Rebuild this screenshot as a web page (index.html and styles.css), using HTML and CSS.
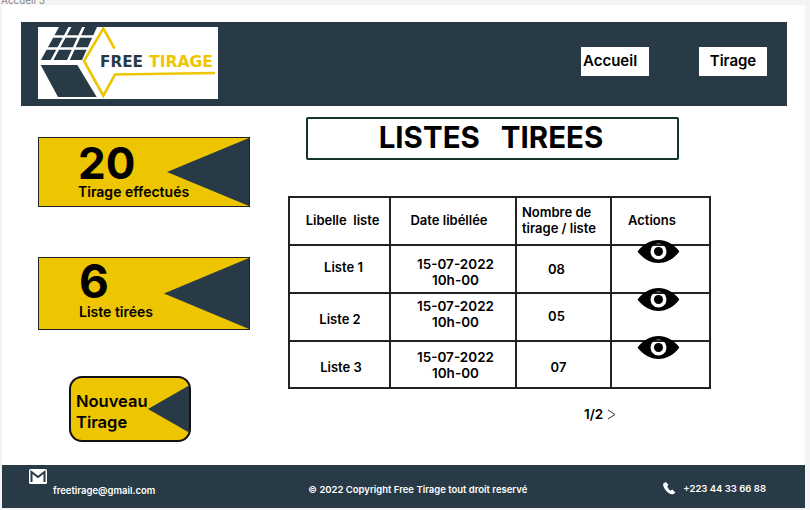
FILE: index.html
```html
<!DOCTYPE html>
<html lang="fr">
<head>
  <meta charset="UTF-8">
  <title>Free Tirage</title>
  <link rel="stylesheet" href="styles.css">
</head>
<body>
  <div class="topnote"><span>Accueil 3</span></div>
  <div class="frame">
    <!-- entete -->
    <header class="header">
      <svg class="logo" width="180" height="72" viewBox="0 0 180 72">
        <rect width="180" height="72" fill="#fff"/>
        <polygon points="21,0 59,0 44,33 3,33" fill="#283a45"/>
        <path d="M0 9.5H60M0 21.5H60M32.5 -1L13.5 34M46 -1L30 34" stroke="#fff" stroke-width="2.6" fill="none"/>
        <polygon points="2.7,38 39.3,38 58.7,70 20,70" fill="#283a45"/>
        <polyline points="76,20.5 65.3,1.5 46,34 65.3,68.7 77,47.5 176,46" fill="none" stroke="#edc500" stroke-width="2.6" stroke-linecap="round"/>
        <text class="logo-text" x="62" y="40" fill="#283a45" textLength="43" lengthAdjust="spacingAndGlyphs">FREE</text>
        <text class="logo-text" x="111" y="40" fill="#edc500" textLength="64" lengthAdjust="spacingAndGlyphs">TIRAGE</text>
      </svg>
      <nav class="nav">
        <a class="nav-link nav-first" href="#">Accueil</a>
        <a class="nav-link" href="#">Tirage</a>
      </nav>
    </header>

    <main class="main">
      <aside class="side">
        <div class="stat">
          <div class="stat-text">
            <div class="stat-num">20</div>
            <div class="stat-label">Tirage effectués</div>
          </div>
          <div class="wedge"></div>
        </div>
        <div class="stat stat-two">
          <div class="stat-text">
            <div class="stat-num">6</div>
            <div class="stat-label">Liste tirées</div>
          </div>
          <div class="wedge"></div>
        </div>
        <a class="new-btn" href="#">
          <span>Nouveau<br>Tirage</span>
          <div class="new-wedge"></div>
        </a>
      </aside>

      <section class="content">
        <h1 class="title">LISTES   TIREES</h1>
        <table class="lists">
          <tr class="head">
            <th class="c1">Libelle  liste</th>
            <th class="c2">Date libéllée</th>
            <th class="c3">Nombre de tirage / liste</th>
            <th class="c4">Actions</th>
          </tr>
          <tr class="r1">
            <td class="name">Liste 1</td>
            <td class="date">15-07-2022<br>10h-00</td>
            <td class="count">08</td>
            <td class="act"><svg class="eye" viewBox="0 0 42 23"><use href="#eye"/></svg></td>
          </tr>
          <tr class="r2">
            <td class="name">Liste 2</td>
            <td class="date">15-07-2022<br>10h-00</td>
            <td class="count">05</td>
            <td class="act"><svg class="eye" viewBox="0 0 42 23"><use href="#eye"/></svg></td>
          </tr>
          <tr class="r3">
            <td class="name">Liste 3</td>
            <td class="date">15-07-2022<br>10h-00</td>
            <td class="count">07</td>
            <td class="act"><svg class="eye" viewBox="0 0 42 23"><use href="#eye"/></svg></td>
          </tr>
        </table>
        <div class="pager">
          <span>1/2</span>
          <svg width="9" height="11" viewBox="0 0 9 11"><path d="M1 1L8 5.5L1 10" fill="none" stroke="#283a45" stroke-width="1"/></svg>
        </div>
      </section>
    </main>

    <footer class="footer">
      <div class="foot-mail">
        <svg width="18" height="15" viewBox="0 0 18 15">
          <rect width="18" height="15" rx="1.5" fill="#fff"/>
          <path d="M2.5 13V3L9 8L15.5 3V13" fill="none" stroke="#283a45" stroke-width="2"/>
        </svg>
        <span class="mail-text">freetirage@gmail.com</span>
      </div>
      <div class="foot-copy">© 2022 Copyright Free Tirage tout droit reservé</div>
      <div class="foot-phone">
        <svg width="14" height="14" viewBox="0 0 24 24"><path d="M6.6 1.5L2.6 4C1 6 2 10 6 15.5C10.500 21 16 24 19.500 22.500L23 19.500L17.500 14.500L14.500 16.500C12.500 15.500 9.500 11.500 9 9L11 6.500Z" fill="#fff"/></svg>
        <span>+223 44 33 66 88</span>
      </div>
    </footer>
  </div>

  <svg width="0" height="0" class="defs">
    <symbol id="eye" viewBox="0 0 42 23">
      <path fill-rule="evenodd" d="M0 11.500C6 4 13 0 21 0S36 4 42 11.500C36 19 29 23 21 23S6 19 0 11.500ZM21 3.500A8 8 0 1 0 21 19.500A8 8 0 1 0 21 3.500Z" fill="#000"/>
      <circle cx="21" cy="11.500" r="4.500" fill="#000"/>
    </symbol>
  </svg>
</body>
</html>
```

FILE: styles.css
```css
* {
  box-sizing: border-box;
}

body {
  margin: 0;
  height: 510px;
  overflow: hidden;
  background-color: #f4f4f4;
  font-family: Inter, "Liberation Sans", sans-serif;
  color: #000;
}

.topnote {
  height: 5px;
  overflow: hidden;
  font-size: 10px;
  line-height: 1px;
  color: #8a8a8a;
  padding-left: 1px;
}

.frame {
  margin: 0 5px 0 2px;
  height: 503px;
  padding-top: 17px;
  background-color: #fff;
}

.header {
  display: flex;
  align-items: center;
  justify-content: space-between;
  height: 84px;
  margin: 0 18px 0 19px;
  padding: 0 20px 0 17px;
  background-color: #283a45;
}

.logo {
  display: block;
  margin-top: -2px;
}

.logo-text {
  font-family: "DejaVu Sans", sans-serif;
  font-weight: 700;
  font-size: 15px;
}

.nav {
  display: flex;
  gap: 50px;
}

.nav-link {
  display: block;
  width: 68px;
  height: 29px;
  margin-top: -6px;
  background-color: #fff;
  color: #000;
  font-size: 15px;
  font-weight: 600;
  line-height: 28px;
  text-align: center;
  text-decoration: none;
}

.nav-first {
  text-align: left;
  padding-left: 2px;
}

.main {
  display: flex;
  gap: 39px;
  height: 359px;
  padding-left: 36px;
}

.side {
  width: 212px;
  padding-top: 31px;
}

.stat {
  display: flex;
  justify-content: space-between;
  height: 70px;
  margin-bottom: 50px;
  background-color: #edc500;
  border: 1px solid #222;
}

.stat-two {
  height: 73px;
  margin-bottom: 46px;
}

.stat-text {
  width: 128px;
  flex: none;
  padding-left: 39px;
  white-space: nowrap;
}

.stat-num {
  font-size: 44px;
  font-weight: 700;
  line-height: 36px;
  margin-top: 7px;
  margin-bottom: 3px;
}

.stat-label {
  font-size: 14px;
  font-weight: 600;
  line-height: 16px;
}

.stat-two .stat-text {
  width: 125px;
  padding-left: 40px;
}

.stat-two .stat-num {
  font-size: 46px;
  line-height: 38px;
  margin-top: 4px;
  margin-bottom: 4px;
}

.wedge {
  flex: none;
  width: 82px;
  background-color: #283a45;
  clip-path: polygon(100% 0, 0 50%, 100% 100%);
}

.stat-two .wedge {
  width: 85px;
}

.new-btn {
  display: flex;
  align-items: center;
  justify-content: space-between;
  width: 122px;
  height: 66px;
  margin-left: 31px;
  padding-left: 5px;
  background-color: #edc500;
  border: 2px solid #111;
  border-radius: 13px;
  color: #000;
  font-size: 16.500px;
  font-weight: 600;
  line-height: 21px;
  text-decoration: none;
}

.new-btn span {
  padding-top: 6px;
}

.new-wedge {
  flex: none;
  width: 41px;
  height: 47px;
  background-color: #283a45;
  clip-path: polygon(100% 0, 0 50%, 100% 100%);
}

.content {
  width: 422px;
  padding-top: 11px;
}

.title {
  width: 373px;
  height: 43px;
  margin: 0 0 36px 17px;
  padding-right: 3px;
  border: 2px solid #12352a;
  border-radius: 2px;
  font-size: 29.500px;
  font-weight: 700;
  line-height: 36px;
  text-align: center;
  white-space: pre;
}

.lists {
  width: 421px;
  margin-left: -1px;
  border-collapse: collapse;
  table-layout: fixed;
  font-size: 13px;
  line-height: 16px;
}

.lists th,
.lists td {
  border: 2px solid #222;
  height: 48px;
  padding: 2px 4px 0;
  text-align: center;
  font-weight: 600;
  white-space: pre-line;
}

.c1 { width: 101px; }
.c2 { width: 126px; }
.c3 { width: 95px; }
.c4 { width: 99px; }

.lists .head th {
  padding-top: 0;
  padding-bottom: 2px;
}

.lists .c1 {
  padding-left: 10px;
  white-space: pre;
}

.lists .c2 {
  padding-right: 12px;
}

.lists .c3 {
  padding-right: 0;
  text-align: left;
  padding-left: 5px;
}

.lists .c4 {
  text-align: left;
  padding-left: 16px;
}

.lists .date {
  padding-left: 9px;
  font-size: 13.500px;
}

.lists .count {
  padding-right: 18px;
}

.lists .r1 .name {
  padding-left: 12px;
  padding-bottom: 6px;
}

.lists .r1 .date {
  padding-top: 6px;
}

.lists .r1 .count {
  padding-bottom: 2px;
}

.lists .r2 .name {
  padding-top: 4px;
  padding-left: 5px;
}

.lists .r2 .date {
  padding-bottom: 8px;
}

.lists .r2 .count {
  padding-bottom: 4px;
}

.lists .r3 td {
  height: 47px;
}

.lists .r3 .name {
  padding-left: 7px;
  padding-top: 4px;
}

.lists .r3 .date {
  padding-bottom: 2px;
}

.lists .r3 .count {
  padding-right: 14px;
  padding-top: 4px;
}

.lists .act {
  position: relative;
}

.eye {
  position: absolute;
  left: 25px;
  top: -6px;
  width: 43px;
  height: 23px;
}

.pager {
  display: flex;
  align-items: center;
  gap: 4px;
  margin: 17px 0 0 295px;
  font-size: 13.500px;
  font-weight: 600;
}

.footer {
  display: flex;
  justify-content: space-between;
  align-items: flex-end;
  height: 43px;
  padding: 0 39px 13px 27px;
  background-color: #283a45;
  color: #fff;
  font-size: 9.500px;
  font-weight: 600;
}

.foot-mail svg {
  display: block;
  margin-bottom: 1px;
}

.foot-mail {
  margin-bottom: -1px;
}

.mail-text {
  display: block;
  padding-left: 24px;
}

.foot-copy {
  margin-left: 18px;
}

.foot-phone {
  display: flex;
  align-items: center;
  gap: 7px;
}

.defs {
  position: absolute;
}
```
